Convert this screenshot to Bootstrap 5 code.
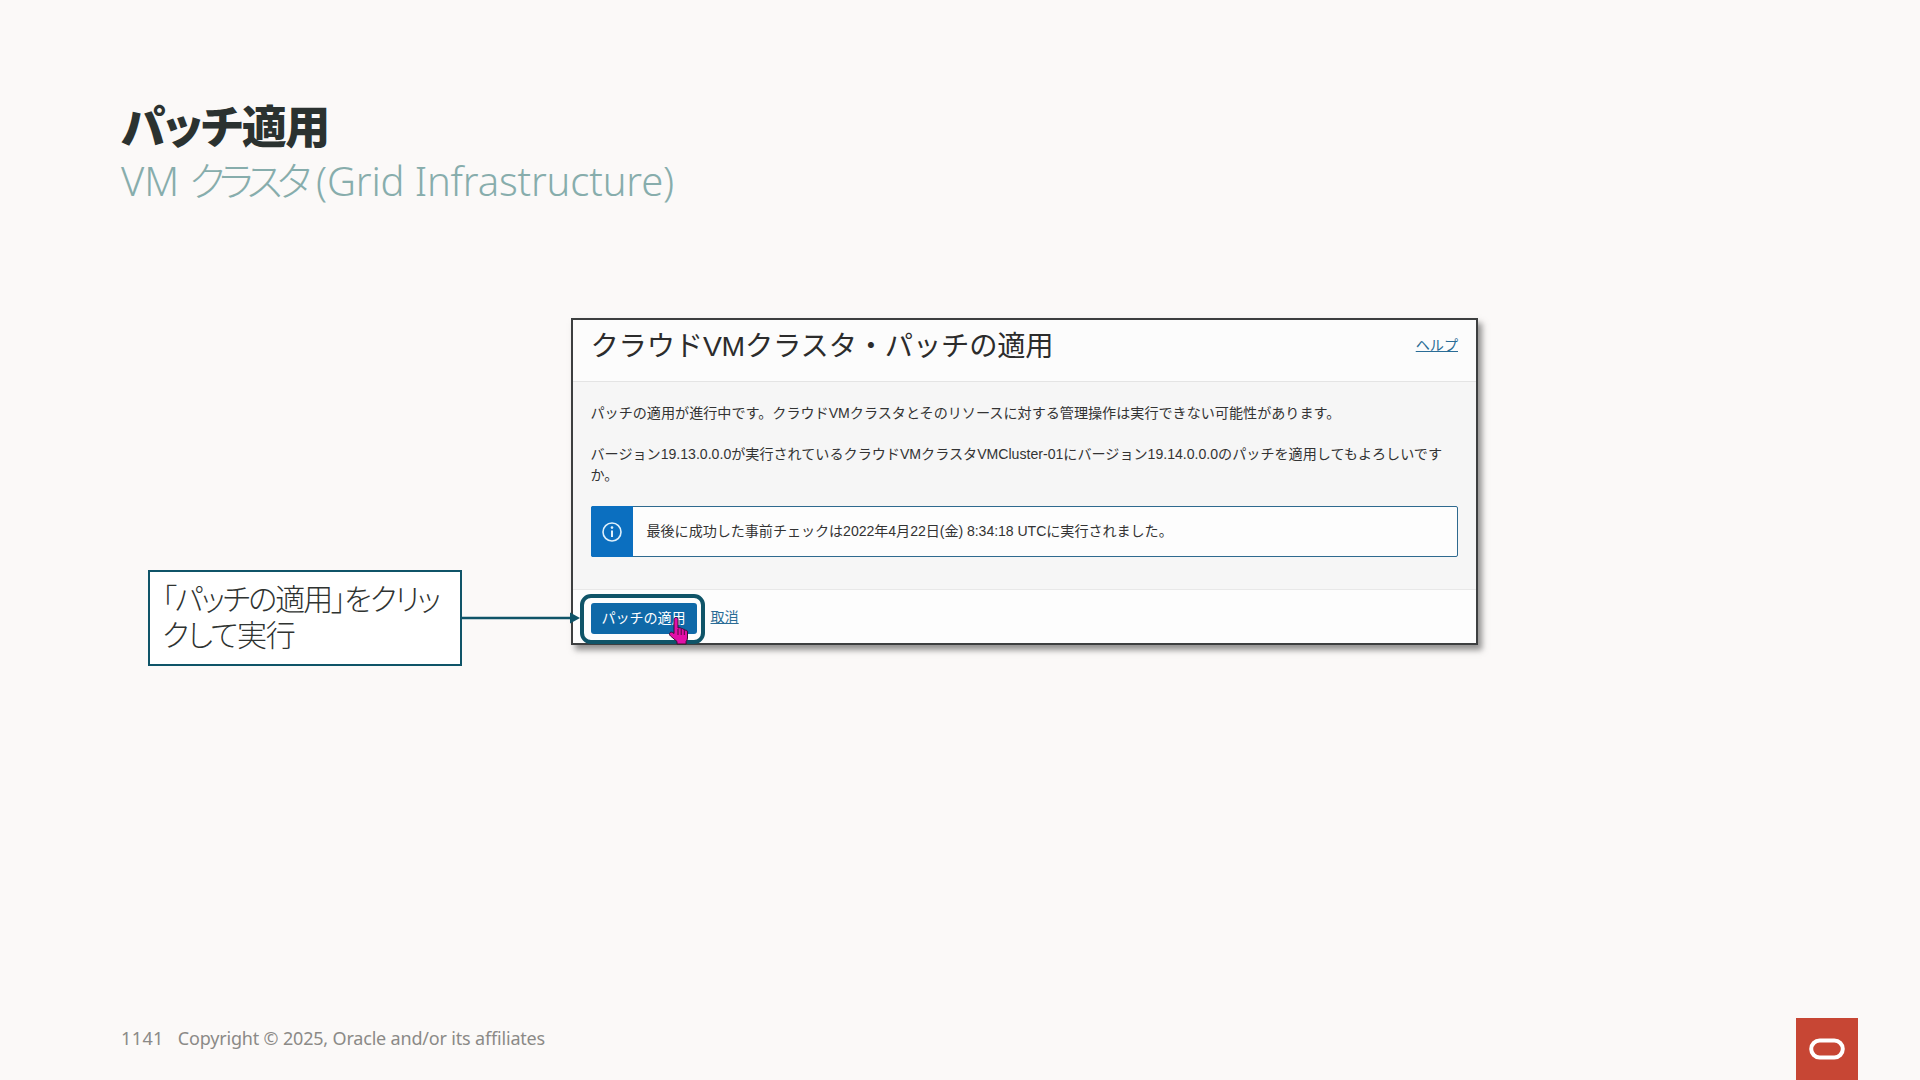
<!DOCTYPE html>
<html lang="ja">
<head>
<meta charset="utf-8">
<title>パッチ適用</title>
<link href="https://cdn.jsdelivr.net/npm/bootstrap@5.3.0/dist/css/bootstrap.min.css" rel="stylesheet">
<style>
html,body{margin:0;height:100%;background:#fbf9f8;overflow:hidden}
.sheet{width:1920px;height:1080px;padding:96px 0 0 121px;position:relative;font-family:"Noto Sans","Noto Sans CJK JP",sans-serif}
.ttl{font-family:"Noto Sans CJK JP",sans-serif;font-weight:900;font-size:45px;line-height:58px;color:#2b3230;font-feature-settings:"palt";letter-spacing:-1.3px;margin:0}
.sub{font-family:"Noto Sans","Noto Sans CJK JP",sans-serif;font-weight:300;font-size:40px;line-height:53px;color:#87adac;font-feature-settings:"palt";letter-spacing:-.15px;margin:0}
.kana{letter-spacing:-6px}
.stage{margin-top:111px;align-items:flex-start}
.callwrap{margin:252px 0 0 27px;position:relative;z-index:2}
.callbox{width:314px;height:96px;background:#fff;border:2px solid #0f5468;padding:7px 12px;font-family:"Noto Sans CJK JP",sans-serif;font-weight:300;font-size:30px;line-height:36px;font-feature-settings:"palt";letter-spacing:-2px;color:#2f3331;white-space:nowrap}
.tailline{letter-spacing:-1.300px}
.arrowsvg{display:block;flex:none;width:118px;height:14px;margin-right:-9px}
.dlg{width:907px;height:327px;border:2px solid #3d3f40;border-radius:0;box-shadow:4px 5px 6px rgba(60,60,60,.55);font-family:"Liberation Sans","Noto Sans CJK JP",sans-serif;font-size:14.100px;color:#333;background:#fcfcfc;overflow:visible}
.dlg .card-header{height:62px;background:#fcfcfc;border-bottom:1px solid #e4e4e4;padding:0 18px 9px 17.500px;border-radius:0}
.dlgttl{font-size:28.300px;font-weight:400;margin:0;color:#2c2c2c;letter-spacing:-.2px;line-height:44px}
.lnk{color:#2a6c96;text-decoration:underline}
.dlg .card-body{background:#f6f6f6;padding:21px 18px 0 17.500px;height:207px;flex:none}
.para{margin:0;line-height:21px;color:#333}
.para2{margin-top:20px}
.note{height:51px;margin-top:20px;border:1px solid #2f6a8f;border-radius:2px;background:#fdfdfd;margin-bottom:0;padding:0}
.notei{width:42px;background:#0b6fc0;border-radius:2px 0 0 2px;margin:-1px 0 -1px -1px}
.notet{padding-left:14px;letter-spacing:-.05px}
.dlg .card-footer{background:#fdfdfd;border-top:1px solid #e8e8e8;padding:13px 18px 0 17.500px;flex:1;border-radius:0;position:relative}
.apply{background:#0f69a8;border:0;border-radius:3px;color:#fff;font-size:14.100px;font-weight:400;height:31px;width:106px;padding:0;letter-spacing:-.1px}
.cancel{margin-left:6px}
.ring{position:absolute;left:7px;top:4px;width:125px;height:50px;border:4px solid #0f5468;border-radius:11px;pointer-events:none}
.hand{position:absolute;left:95px;top:26px;width:24px;height:29px}
.foot{position:absolute;left:121px;top:1024px;font-size:18px;line-height:28px;color:#8b8a87;font-family:"Noto Sans",sans-serif}
.foot span{letter-spacing:.4px}
.foot span+span{margin-left:14px;letter-spacing:-.18px}
.orcl{position:absolute;left:1796px;top:1018px;width:62px;height:62px;background:#c74634}
</style>
</head>
<body>
<div class="sheet">
  <h1 class="ttl">パッチ適用</h1>
  <p class="sub">VM <span class="kana">クラスタ</span> (Grid Infrastructure)</p>
  <div class="stage d-flex">
    <div class="callwrap d-flex align-items-center">
      <div class="callbox">「パッチの適用」をクリッ<br><span class="tailline">クして実行</span></div>
      <svg class="arrowsvg" viewBox="0 0 118 14"><path d="M0 7H110" stroke="#0f5468" stroke-width="2.400"/><path d="M118 7 108 1.500V12.500Z" fill="#0f5468"/></svg>
    </div>
    <div class="card dlg">
      <div class="card-header d-flex justify-content-between align-items-center">
        <h2 class="dlgttl">クラウドVMクラスタ・パッチの適用</h2>
        <a class="lnk" href="#">ヘルプ</a>
      </div>
      <div class="card-body">
        <p class="para">パッチの適用が進行中です。クラウドVMクラスタとそのリソースに対する管理操作は実行できない可能性があります。</p>
        <p class="para para2">バージョン19.13.0.0.0が実行されているクラウドVMクラスタVMCluster-01にバージョン19.14.0.0.0のパッチを適用してもよろしいですか。</p>
        <div class="alert note d-flex align-items-stretch">
          <div class="notei d-flex align-items-center justify-content-center">
            <svg width="22" height="22" viewBox="0 0 22 22" fill="none"><circle cx="11" cy="11" r="9" stroke="#dff0fb" stroke-width="1.600"/><circle cx="11" cy="6.600" r="1.300" fill="#dff0fb"/><path d="M11 9.500V16" stroke="#dff0fb" stroke-width="2"/></svg>
          </div>
          <div class="notet d-flex align-items-center">最後に成功した事前チェックは2022年4月22日(金) 8:34:18 UTCに実行されました。</div>
        </div>
      </div>
      <div class="card-footer d-flex align-items-start gap-2">
        <button class="btn apply" type="button">パッチの適用</button>
        <a class="lnk cancel mt-1" href="#">取消</a>
        <span class="ring"></span>
        <svg class="hand" viewBox="0 0 24 29"><path d="M8 1.500c1.300 0 2 .9 2 2V12l1-.3c.9-.2 1.600.1 2 .8.9-.3 1.700 0 2.100.8.9-.3 1.800 0 2.200.9.9-.2 2.200.3 2.200 1.800V22c0 1.600-.6 2.500-1.400 3.400V28H9v-2.500L2.500 20c-1.200-1.100-1.300-2.400-.5-3.300.8-.8 2-.7 3 0l1 .8V3.500c0-1.100.9-2 2-2Z" fill="#e30fa8" stroke="#3a1030" stroke-width="1"/><path d="M10 13v6M13.200 13v6M16.300 14v5" stroke="#3a1030" stroke-width=".9"/></svg>
      </div>
    </div>
  </div>
  <div class="foot d-flex"><span>1141</span><span>Copyright © 2025, Oracle and/or its affiliates</span></div>
  <div class="orcl d-flex align-items-center justify-content-center">
    <svg width="36" height="24" viewBox="0 0 36 24"><rect x="2.200" y="3.500" width="31.600" height="17" rx="8.500" fill="none" stroke="#fff" stroke-width="4"/></svg>
  </div>
</div>
</body>
</html>
